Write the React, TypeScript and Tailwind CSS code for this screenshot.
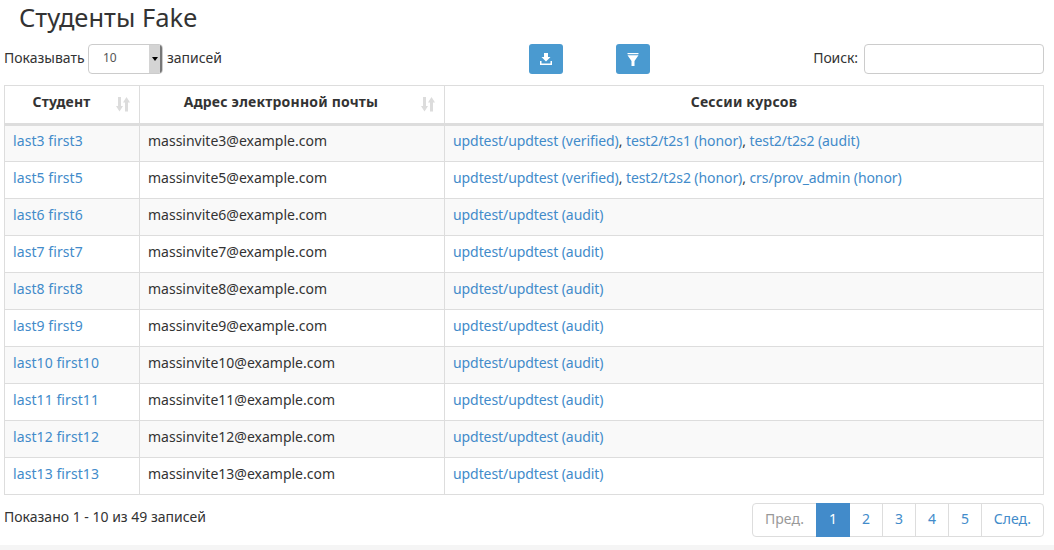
import React from "react";

const rows = [
  { n: 3, sessions: ["updtest/updtest (verified)", "test2/t2s1 (honor)", "test2/t2s2 (audit)"] },
  { n: 5, sessions: ["updtest/updtest (verified)", "test2/t2s2 (honor)", "crs/prov_admin (honor)"] },
  { n: 6, sessions: ["updtest/updtest (audit)"] },
  { n: 7, sessions: ["updtest/updtest (audit)"] },
  { n: 8, sessions: ["updtest/updtest (audit)"] },
  { n: 9, sessions: ["updtest/updtest (audit)"] },
  { n: 10, sessions: ["updtest/updtest (audit)"] },
  { n: 11, sessions: ["updtest/updtest (audit)"] },
  { n: 12, sessions: ["updtest/updtest (audit)"] },
  { n: 13, sessions: ["updtest/updtest (audit)"] },
];

const SortIcon = () => (
  <svg className="absolute right-[9px] top-[10px] w-[14px] h-[16px] text-[#dcdcdc]" viewBox="0 0 14 16" fill="currentColor">
    <path d="M2 1h3v9h2L3.500 15.500 0 10h2z" />
    <path d="M9 15.500h3v-9h2L10.500 1 7 6.500h2z" />
  </svg>
);

const App = () => {
  return (
    <div className="w-[1054px] h-[550px] bg-white overflow-hidden text-[14px] text-[#333] font-['Noto_Sans',sans-serif]">
      <h1 className="pl-[19px] h-[44px] text-[25.5px] leading-[34px] text-[#333]">Студенты Fake</h1>

      <div className="flex items-center h-[30px] pl-[4px] pr-[10px]">
        <div className="flex items-center w-[525px] pb-[4px]">
          <span className="w-[80px]">Показывать</span>
          <div className="ml-[4px] mt-[4px] flex w-[75px] h-[30px] border border-[#ccc] rounded-[4px] bg-white overflow-hidden">
            <span className="flex-1 pl-[14px] text-[12px] leading-[26px] text-[#555]">10</span>
            <span className="w-[13px] h-full bg-[#d4d4d4] border-r-2 border-[#777] flex items-center justify-center">
              <span className="w-0 h-0 border-x-[3px] border-x-transparent border-t-[4px] border-t-black" />
            </span>
          </div>
          <span className="ml-[4px]">записей</span>
        </div>
        <button className="w-[34px] h-[30px] rounded-[3px] bg-[#4a9ad0] flex items-center justify-center">
          <svg className="w-[12px] h-[12px] text-white" viewBox="0 0 12 12" fill="currentColor">
            <path d="M4 0h4v4h2.500L6 8.500 1.500 4H4z" />
            <path d="M0 8h1.500v2.500h9V8H12v4H0z" />
          </svg>
        </button>
        <button className="ml-[53px] w-[34px] h-[30px] rounded-[3px] bg-[#4a9ad0] flex items-center justify-center">
          <svg className="w-[12px] h-[13px] text-white" viewBox="0 0 12 13" fill="currentColor">
            <path d="M.5 0h11v1.200H.5z" />
            <path d="M.5 2.200h11L7.500 8v5h-3V8z" />
          </svg>
        </button>
        <div className="ml-auto flex items-center">
          <label className="pb-[4px] tracking-[-0.1px]">Поиск:</label>
          <input className="ml-[6px] w-[180px] h-[30px] border border-[#ccc] rounded-[4px] bg-white" />
        </div>
      </div>

      <div className="pl-[4px] pt-[11px]">
        <table className="w-[1040px] table-fixed border-collapse border border-[#ddd]">
          <thead>
            <tr className="h-[39px]">
              <th className="relative w-[135px] border border-[#ddd] border-b-[3px] font-bold text-center pr-[21px] pb-[6px] tracking-[0.2px]">
                Студент
                <SortIcon />
              </th>
              <th className="relative w-[305px] border border-[#ddd] border-b-[3px] font-bold text-center pr-[22px] pb-[6px] tracking-[0.2px]">
                Адрес электронной почты
                <SortIcon />
              </th>
              <th className="border border-[#ddd] border-b-[3px] font-bold text-center pb-[6px] tracking-[0.2px]">Сессии курсов</th>
            </tr>
          </thead>
          <tbody>
            {rows.map((row, i) => (
              <tr key={row.n} className={i % 2 === 0 ? "h-[37px] bg-[#f9f9f9]" : "h-[37px] bg-white"}>
                <td className="border border-[#ddd] px-[8px] pb-[6px] tracking-[0.08px]">
                  <a className="text-[#428bca]">last{row.n} first{row.n}</a>
                </td>
                <td className="border border-[#ddd] px-[8px] pb-[6px]">massinvite{row.n}@example.com</td>
                <td className="border border-[#ddd] px-[8px] pb-[6px] tracking-[-0.08px]">
                  {row.sessions.map((s, j) => (
                    <React.Fragment key={s}>
                      {j > 0 && ", "}
                      <a className="text-[#428bca]">{s}</a>
                    </React.Fragment>
                  ))}
                </td>
              </tr>
            ))}
          </tbody>
        </table>
      </div>

      <div className="flex items-start justify-between pl-[4px] pr-[10px] pt-[8px]">
        <div className="pt-[4px] leading-[20px]">Показано 1 - 10 из 49 записей</div>
        <div className="flex h-[34px] border border-[#ddd] rounded-[4px] leading-[30px] text-center text-[#428bca]">
          <span className="w-[63px] text-[#999]">Пред.</span>
          <span className="w-[34px] -my-px h-[34px] leading-[32px] bg-[#428bca] text-white">1</span>
          <span className="w-[33px] border-r border-[#ddd]">2</span>
          <span className="w-[33px] border-r border-[#ddd]">3</span>
          <span className="w-[33px] border-r border-[#ddd]">4</span>
          <span className="w-[33px] border-r border-[#ddd]">5</span>
          <span className="w-[61px]">След.</span>
        </div>
      </div>
      <div className="mt-[8px] h-[20px] bg-[#f5f5f5]" />
    </div>
  );
};

export default App;
